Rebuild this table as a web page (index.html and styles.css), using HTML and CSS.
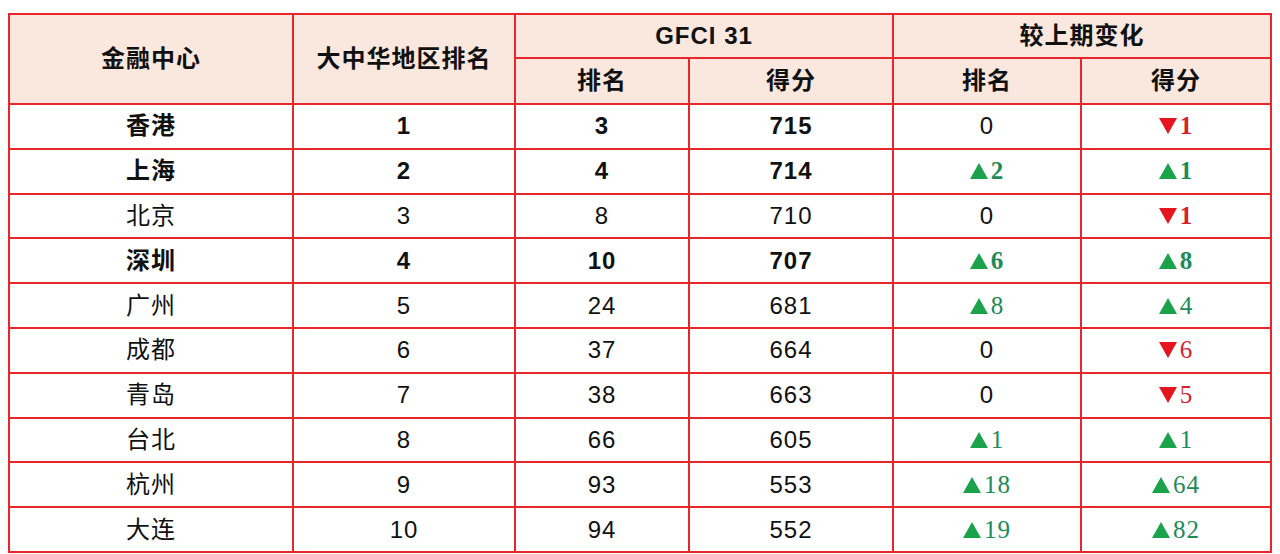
FILE: index.html
```html
<!DOCTYPE html>
<html lang="zh">
<head>
<meta charset="utf-8">
<link rel="stylesheet" href="styles.css">
</head>
<body>
<table class="rank">
  <colgroup>
    <col class="c1"><col class="c2"><col class="c3"><col class="c4"><col class="c5"><col class="c6">
  </colgroup>
  <thead>
    <tr class="h1">
      <th rowspan="2">金融中心</th>
      <th rowspan="2">大中华地区排名</th>
      <th colspan="2">GFCI 31</th>
      <th colspan="2">较上期变化</th>
    </tr>
    <tr class="h2">
      <th>排名</th><th>得分</th><th>排名</th><th>得分</th>
    </tr>
  </thead>
  <tbody>
    <tr class="b"><td>香港</td><td>1</td><td>3</td><td>715</td><td class="zero">0</td><td class="chg dn"><svg class="tri" viewBox="0 0 18 16"><path d="M0 0H18L9 16Z"/></svg>1</td></tr>
    <tr class="b"><td>上海</td><td>2</td><td>4</td><td>714</td><td class="chg up"><svg class="tri" viewBox="0 0 18 16"><path d="M9 0L18 16H0Z"/></svg>2</td><td class="chg up"><svg class="tri" viewBox="0 0 18 16"><path d="M9 0L18 16H0Z"/></svg>1</td></tr>
    <tr><td>北京</td><td>3</td><td>8</td><td>710</td><td class="zero">0</td><td class="chg dn b2"><svg class="tri" viewBox="0 0 18 16"><path d="M0 0H18L9 16Z"/></svg>1</td></tr>
    <tr class="b"><td>深圳</td><td>4</td><td>10</td><td>707</td><td class="chg up"><svg class="tri" viewBox="0 0 18 16"><path d="M9 0L18 16H0Z"/></svg>6</td><td class="chg up"><svg class="tri" viewBox="0 0 18 16"><path d="M9 0L18 16H0Z"/></svg>8</td></tr>
    <tr><td>广州</td><td>5</td><td>24</td><td>681</td><td class="chg up"><svg class="tri" viewBox="0 0 18 16"><path d="M9 0L18 16H0Z"/></svg>8</td><td class="chg up"><svg class="tri" viewBox="0 0 18 16"><path d="M9 0L18 16H0Z"/></svg>4</td></tr>
    <tr><td>成都</td><td>6</td><td>37</td><td>664</td><td class="zero">0</td><td class="chg dn"><svg class="tri" viewBox="0 0 18 16"><path d="M0 0H18L9 16Z"/></svg>6</td></tr>
    <tr><td>青岛</td><td>7</td><td>38</td><td>663</td><td class="zero">0</td><td class="chg dn"><svg class="tri" viewBox="0 0 18 16"><path d="M0 0H18L9 16Z"/></svg>5</td></tr>
    <tr><td>台北</td><td>8</td><td>66</td><td>605</td><td class="chg up"><svg class="tri" viewBox="0 0 18 16"><path d="M9 0L18 16H0Z"/></svg>1</td><td class="chg up"><svg class="tri" viewBox="0 0 18 16"><path d="M9 0L18 16H0Z"/></svg>1</td></tr>
    <tr><td>杭州</td><td>9</td><td>93</td><td>553</td><td class="chg up"><svg class="tri" viewBox="0 0 18 16"><path d="M9 0L18 16H0Z"/></svg>18</td><td class="chg up"><svg class="tri" viewBox="0 0 18 16"><path d="M9 0L18 16H0Z"/></svg>64</td></tr>
    <tr><td>大连</td><td>10</td><td>94</td><td>552</td><td class="chg up"><svg class="tri" viewBox="0 0 18 16"><path d="M9 0L18 16H0Z"/></svg>19</td><td class="chg up"><svg class="tri" viewBox="0 0 18 16"><path d="M9 0L18 16H0Z"/></svg>82</td></tr>
  </tbody>
</table>
</body>
</html>
```
FILE: styles.css
```css
html, body {
  margin: 0;
  padding: 0;
  background: #ffffff;
}
body {
  padding: 13px 0 0 8px;
  font-family: "Liberation Sans", "Noto Sans CJK SC", sans-serif;
  color: #111111;
}
.rank {
  border-collapse: collapse;
  table-layout: fixed;
  width: 1262px;
}
.c1 { width: 284px; }
.c2 { width: 222px; }
.c3 { width: 174px; }
.c4 { width: 204px; }
.c5 { width: 188px; }
.c6 { width: 190px; }
.rank th, .rank td {
  border: 2px solid #e8262c;
  text-align: center;
  vertical-align: middle;
  padding: 0;
  font-size: 24px;
  line-height: 28px;
  letter-spacing: 1px;
}
.rank th {
  background: #fae7dd;
  font-weight: 700;
  font-family: "Liberation Sans", "Noto Sans CJK SC", sans-serif;
}
.h1 th { height: 42px; }
.h2 th { height: 44px; }
.rank td {
  height: 42.8px;
  font-weight: 400;
}
.rank tr.b td { font-weight: 700; }
.rank tr.b td.zero { font-weight: 400; }
.rank td.chg {
  font-family: "Liberation Serif", "Noto Sans CJK SC", serif;
  font-size: 25px;
}
.rank tr.b td.chg, .rank td.b2 { font-weight: 700; }
.tri {
  width: 18px;
  height: 16px;
  margin-right: 3px;
  vertical-align: 0;
}
.up { color: #1e8a5a; }
.up .tri path { fill: #1aa34a; }
.dn { color: #d4232b; }
.dn .tri path { fill: #e6141e; }
```
